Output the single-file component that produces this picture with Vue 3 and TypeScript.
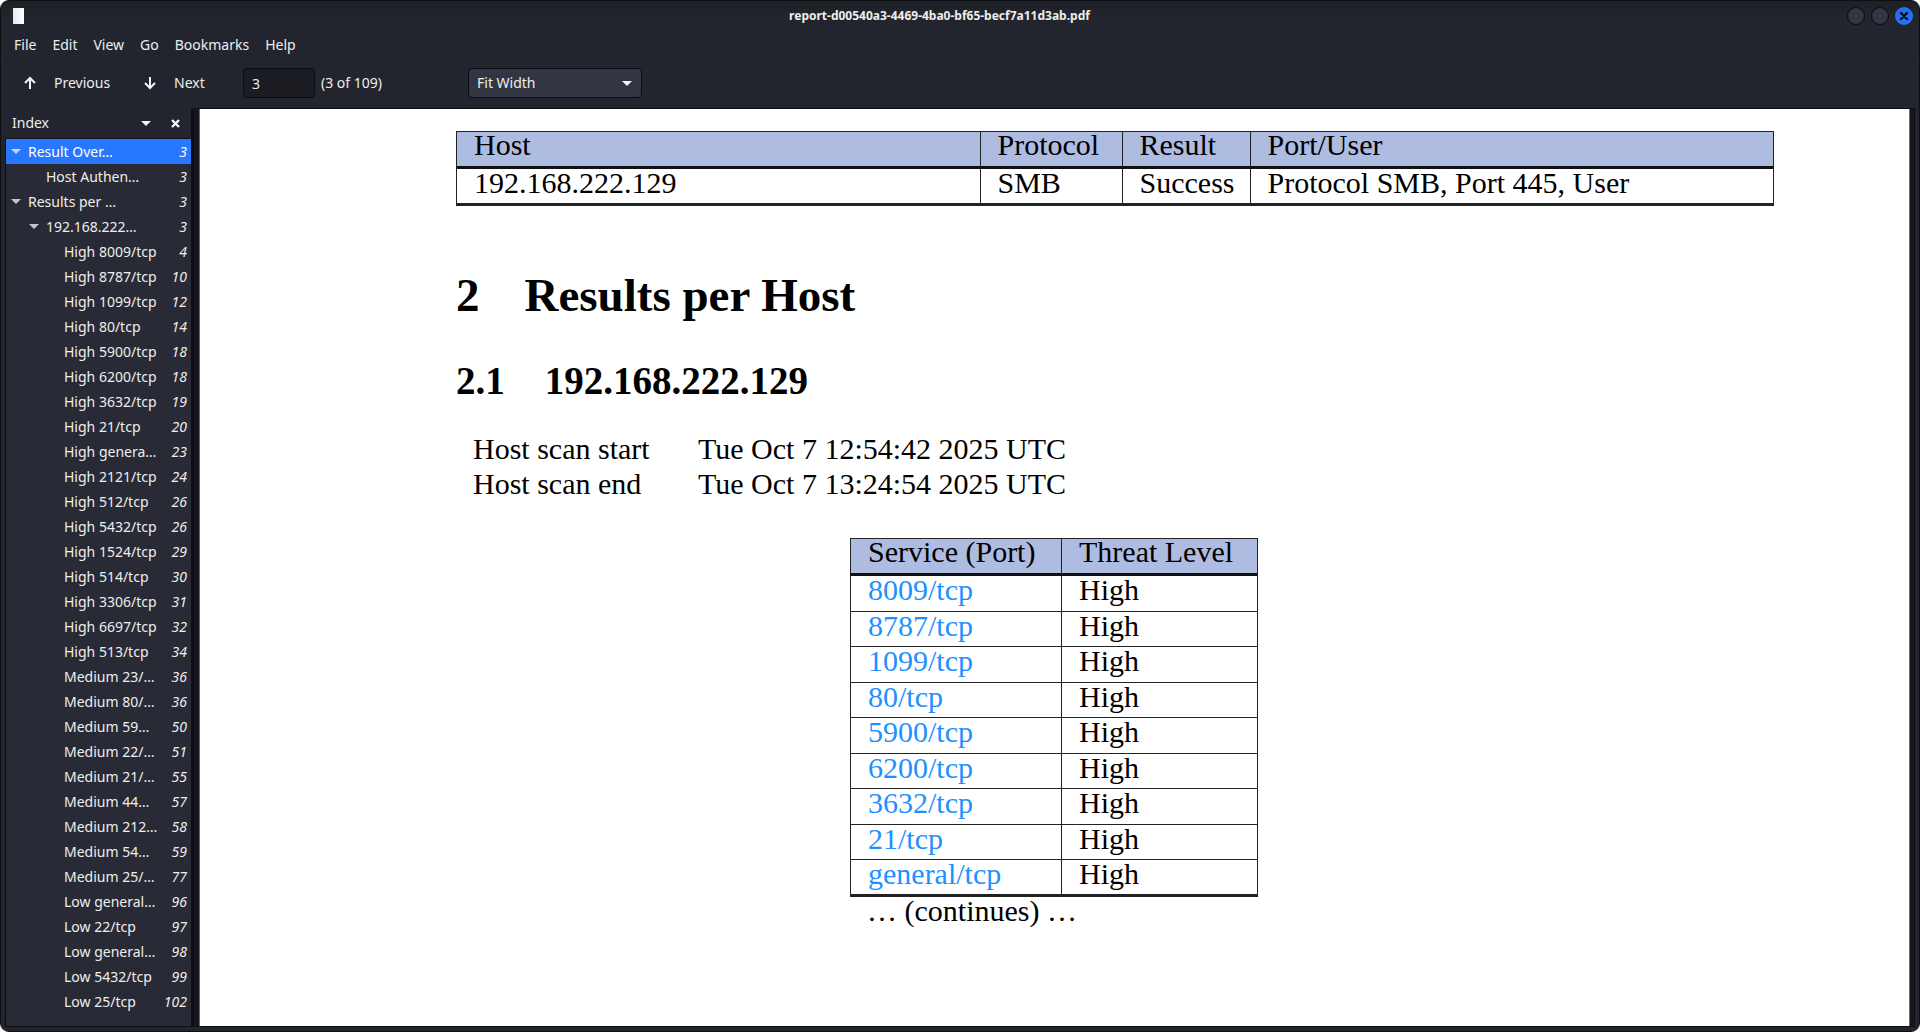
<script setup lang="ts">
import { ref } from 'vue'

interface IndexEntry {
  label: string
  page: number
  level: number
  open?: boolean
}

const menus: string[] = ['File', 'Edit', 'View', 'Go', 'Bookmarks', 'Help']

const page = ref('3')
const zoom = ref('Fit Width')
const selected = ref(0)

const leaf = (label: string, page: number): IndexEntry => ({ label, page, level: 3 })

const entries: IndexEntry[] = [
  { label: 'Result Over…', page: 3, level: 1, open: true },
  { label: 'Host Authen…', page: 3, level: 2 },
  { label: 'Results per …', page: 3, level: 1, open: true },
  { label: '192.168.222…', page: 3, level: 2, open: true },
  leaf('High 8009/tcp', 4),
  leaf('High 8787/tcp', 10),
  leaf('High 1099/tcp', 12),
  leaf('High 80/tcp', 14),
  leaf('High 5900/tcp', 18),
  leaf('High 6200/tcp', 18),
  leaf('High 3632/tcp', 19),
  leaf('High 21/tcp', 20),
  leaf('High genera…', 23),
  leaf('High 2121/tcp', 24),
  leaf('High 512/tcp', 26),
  leaf('High 5432/tcp', 26),
  leaf('High 1524/tcp', 29),
  leaf('High 514/tcp', 30),
  leaf('High 3306/tcp', 31),
  leaf('High 6697/tcp', 32),
  leaf('High 513/tcp', 34),
  leaf('Medium 23/…', 36),
  leaf('Medium 80/…', 36),
  leaf('Medium 59…', 50),
  leaf('Medium 22/…', 51),
  leaf('Medium 21/…', 55),
  leaf('Medium 44…', 57),
  leaf('Medium 212…', 58),
  leaf('Medium 54…', 59),
  leaf('Medium 25/…', 77),
  leaf('Low general…', 96),
  leaf('Low 22/tcp', 97),
  leaf('Low general…', 98),
  leaf('Low 5432/tcp', 99),
  leaf('Low 25/tcp', 102),
]

const services: string[] = [
  '8009/tcp', '8787/tcp', '1099/tcp', '80/tcp', '5900/tcp',
  '6200/tcp', '3632/tcp', '21/tcp', 'general/tcp',
]
</script>

<template>
  <div class="window">
    <header class="titlebar">
      <span class="doc-icon"></span>
      <span class="title">report-d00540a3-4469-4ba0-bf65-becf7a11d3ab.pdf</span>
      <div class="controls">
        <button class="ctl" aria-label="Minimize"></button>
        <button class="ctl" aria-label="Maximize"></button>
        <button class="ctl close" aria-label="Close">
          <svg width="18" height="18" viewBox="0 0 18 18"><path d="M6 6l6 6M12 6l-6 6" stroke="#0c0e14" stroke-width="2.4" stroke-linecap="round" /></svg>
        </button>
      </div>
    </header>

    <nav class="menubar">
      <button v-for="m in menus" :key="m">{{ m }}</button>
    </nav>

    <div class="toolbar">
      <button class="tool prev">
        <svg width="12" height="14" viewBox="0 0 12 14"><path d="M6 13V2M1 7l5-5 5 5" fill="none" stroke="#f4f4f4" stroke-width="2" /></svg>
        <span>Previous</span>
      </button>
      <button class="tool next">
        <svg width="12" height="14" viewBox="0 0 12 14"><path d="M6 1v11M1 7l5 5 5-5" fill="none" stroke="#f4f4f4" stroke-width="2" /></svg>
        <span>Next</span>
      </button>
      <div class="pager">
        <input v-model="page" type="text" aria-label="Page" />
        <span>(3 of 109)</span>
      </div>
      <div class="zoom">
        <select v-model="zoom" aria-label="Zoom">
          <option>Fit Width</option>
          <option>Fit Page</option>
        </select>
        <svg class="arrow" width="10" height="5" viewBox="0 0 10 5"><path d="M0 0h10L5 5z" fill="#f4f4f4" /></svg>
      </div>
    </div>

    <div class="body">
      <aside class="sidebar">
        <div class="side-head">
          <button class="side-title">
            <span>Index</span>
            <svg width="10" height="5" viewBox="0 0 10 5"><path d="M0 0h10L5 5z" fill="#f4f4f4" /></svg>
          </button>
          <button class="side-close" aria-label="Hide side pane">
            <svg width="9" height="9" viewBox="0 0 9 9"><path d="M1 1l7 7M8 1L1 8" stroke="#f4f4f4" stroke-width="2.4" /></svg>
          </button>
        </div>
        <ul class="tree">
          <li v-for="(e, i) in entries" :key="i">
            <a href="#" :class="['row', 'level-' + e.level, { selected: i === selected }]" @click.prevent="selected = i">
              <span class="twist">
                <svg v-if="e.open" width="10" height="5" viewBox="0 0 10 5"><path d="M0 0h10L5 5z" fill="currentColor" /></svg>
              </span>
              <span class="label">{{ e.label }}</span>
              <span class="num">{{ e.page }}</span>
            </a>
          </li>
        </ul>
      </aside>

      <main class="view">
        <article class="paper">
          <table class="auth">
            <colgroup><col class="c-wide" /><col class="c-proto" /><col class="c-result" /><col class="c-wide" /></colgroup>
            <thead>
              <tr><th>Host</th><th>Protocol</th><th>Result</th><th>Port/User</th></tr>
            </thead>
            <tbody>
              <tr><td>192.168.222.129</td><td>SMB</td><td>Success</td><td>Protocol SMB, Port 445, User</td></tr>
            </tbody>
          </table>

          <h1><span>2</span><span>Results per Host</span></h1>
          <h2><span>2.1</span><span>192.168.222.129</span></h2>

          <dl class="scan">
            <dt>Host scan start</dt><dd>Tue Oct 7 12:54:42 2025 UTC</dd>
            <dt>Host scan end</dt><dd>Tue Oct 7 13:24:54 2025 UTC</dd>
          </dl>

          <div class="services">
            <table>
              <thead>
                <tr><th>Service (Port)</th><th>Threat Level</th></tr>
              </thead>
              <tbody>
                <tr v-for="s in services" :key="s">
                  <td><a href="#">{{ s }}</a></td>
                  <td>High</td>
                </tr>
              </tbody>
            </table>
            <p>… (continues) …</p>
          </div>
        </article>
      </main>
    </div>
  </div>
</template>

<style>
body {
  background: #ffffff;
}
</style>

<style scoped>
* {
  box-sizing: border-box;
}
.window {
  display: flex;
  flex-direction: column;
  min-height: 100vh;
  padding: 0 4px 4px;
  border: 1px solid #0d0f14;
  border-radius: 9px;
  background: #23252e;
  color: #eeeeec;
  font: 14px/20px "Noto Sans", "Open Sans", sans-serif;
}
button {
  padding: 0;
  border: 0;
  background: none;
  color: inherit;
  font: inherit;
}
.titlebar {
  display: flex;
  align-items: center;
  height: 30px;
  margin: 0 -4px;
  padding: 0 6px 0 12px;
  border-radius: 8px 8px 0 0;
  background: linear-gradient(#1e2027, #23252e 16px);
}
.doc-icon {
  width: 11px;
  height: 16px;
  background: linear-gradient(90deg, #e8e8e8, #ffffff);
}
.title {
  flex: 1;
  padding-left: 8px;
  text-align: center;
  font-size: 12px;
  font-weight: 700;
}
.controls {
  display: flex;
  gap: 6px;
}
.ctl {
  width: 18px;
  height: 18px;
  border: 1px solid #0b0c11;
  border-radius: 50%;
  background: #333743;
}
.ctl.close {
  border: 0;
  background: #2470f2;
}
.ctl svg {
  display: block;
}
.menubar {
  display: flex;
  gap: 16px;
  height: 27px;
  padding: 4px 9px 0;
  border-bottom: 1px solid #1f2129;
}
.menubar button {
  height: 20px;
}
.toolbar {
  display: flex;
  align-items: center;
  height: 50px;
}
.tool {
  display: flex;
  align-items: center;
  gap: 18px;
}
.prev {
  width: 120px;
  padding-left: 19px;
}
.next {
  width: 104px;
  padding-left: 19px;
}
.pager {
  display: flex;
  align-items: center;
  gap: 6px;
  width: 233px;
  height: 42px;
  padding-left: 13px;
  border: solid #1f2129;
  border-width: 0 1px;
}
.pager input {
  width: 72px;
  height: 30px;
  padding: 0 8px;
  border: 1px solid #0b0c11;
  border-radius: 4px;
  background: #1b1c22;
  color: inherit;
  font: inherit;
}
.zoom {
  position: relative;
  width: 174px;
  margin-left: 6px;
}
.zoom select {
  display: block;
  width: 100%;
  height: 30px;
  padding: 0 8px;
  border: 1px solid #0b0c11;
  border-radius: 4px;
  background: #323643;
  color: inherit;
  font: inherit;
  appearance: none;
}
.zoom .arrow {
  position: absolute;
  top: 13px;
  right: 10px;
  pointer-events: none;
}
.body {
  display: flex;
  flex: 1;
}
.sidebar {
  display: flex;
  flex-direction: column;
  width: 186px;
}
.side-head {
  display: flex;
  align-items: center;
  height: 30px;
  padding: 0 11px 0 7px;
}
.side-title {
  display: flex;
  flex: 1;
  align-items: center;
  justify-content: space-between;
  padding-right: 20px;
}
.side-close svg {
  display: block;
}
.tree {
  flex: 1;
  margin: 0;
  padding: 0;
  border: 1px solid #0d0f14;
  border-right: 0;
  background: #282a36;
  list-style: none;
}
.row {
  display: flex;
  align-items: center;
  height: 25px;
  padding-right: 4px;
  color: inherit;
  text-decoration: none;
}
.row.selected {
  background: #2777ff;
  color: #ffffff;
}
.twist {
  display: flex;
  width: 17px;
  color: #c4c5c9;
}
.selected .twist {
  color: #bed6ff;
}
.level-1 {
  padding-left: 5px;
}
.level-2 {
  padding-left: 23px;
}
.level-3 {
  padding-left: 41px;
}
.label {
  flex: 1;
  white-space: nowrap;
}
.num {
  font-style: italic;
}
.view {
  flex: 1;
  border: solid #0d0f14;
  border-width: 1px 1px 1px 3px;
  background: #15171c;
  padding: 0 4px 0 5px;
}
.paper {
  height: 100%;
  padding: 22px 135px 60px 256px;
  border: solid #2f6fe0;
  border-width: 0 1px;
  background: #ffffff;
  color: #000000;
  font: 30px/35px "Liberation Serif", "Times New Roman", serif;
}
table {
  border-collapse: separate;
  border-spacing: 0;
  border: solid #222222;
  border-width: 1px 1px 3px 0;
}
th,
td {
  padding: 0 17px 8px;
  border-left: 1px solid #222222;
  font-weight: 400;
  text-align: left;
  white-space: nowrap;
}
th {
  height: 37px;
  border-bottom: 3px solid #111111;
  background: #afbce1;
  line-height: 26px;
}
td {
  line-height: 25px;
}
.auth {
  width: 100%;
  table-layout: fixed;
}
.auth td {
  height: 34px;
}
.c-proto {
  width: 142px;
}
.c-result {
  width: 128px;
}
h1,
h2 {
  display: flex;
  margin: 0;
}
h1 {
  gap: 45px;
  padding-top: 63px;
  font-size: 47px;
  line-height: 52px;
}
h2 {
  gap: 40px;
  padding-top: 38px;
  font-size: 39px;
  line-height: 44px;
}
.scan {
  display: grid;
  grid-template-columns: 225px auto;
  justify-content: start;
  margin: 28px 0 37px;
  padding-left: 17px;
}
.scan dd {
  margin: 0;
}
/* centred on the sheet rather than on the text block */
.services {
  width: 408px;
  margin-left: calc(50% - 265px);
}
.services table {
  width: 100%;
}
.services th:first-child {
  width: 211px;
}
.services td {
  height: 36px;
  border-bottom: 1px solid #222222;
}
.services tr:nth-child(even) td {
  height: 35px;
}
.services tbody tr:last-child td {
  height: 34px;
  border-bottom: 0;
}
.services a {
  color: #1e90ff;
  text-decoration: none;
}
.services p {
  margin: 0;
  padding: 0 17px;
  line-height: 27px;
}
</style>
